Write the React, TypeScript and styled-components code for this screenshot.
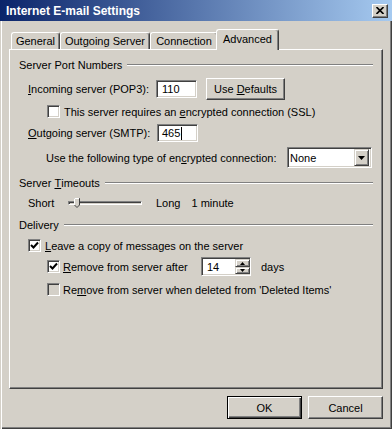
import styled, { createGlobalStyle } from "styled-components";

const GlobalStyle = createGlobalStyle`
  html, body {
    margin: 0;
    padding: 0;
    background: #d4d0c8;
  }
  body {
    font-family: "Liberation Sans", Arial, sans-serif;
    font-size: 11px;
    color: #000;
  }
`;

const Window = styled.div`
  width: 392px;
  height: 429px;
  box-sizing: border-box;
  background: #d4d0c8;
  display: flex;
  flex-direction: column;
  box-shadow: inset 1px 0 0 #d4d0c8, inset 2px 0 0 #fff,
    inset -1px -1px 0 #404040, inset -2px -2px 0 #808080;
`;

const TitleBar = styled.div`
  height: 21px;
  flex-shrink: 0;
  display: flex;
  align-items: center;
  justify-content: space-between;
  padding: 0 4px 0 6px;
  background: linear-gradient(to right, #0a246a, #a6caf0);
`;

const Title = styled.span`
  color: #fff;
  font-weight: bold;
  font-size: 12px;
`;

const CloseButton = styled.div`
  width: 16px;
  height: 14px;
  box-sizing: border-box;
  display: flex;
  align-items: center;
  justify-content: center;
  background: #d4d0c8;
  border: 1px solid;
  border-color: #fff #404040 #404040 #fff;
  box-shadow: inset -1px -1px 0 #808080;
`;

const Body = styled.div`
  flex: 1;
  display: flex;
  flex-direction: column;
  padding: 8px 9px 10px 9px;
`;

const TabStrip = styled.div`
  height: 20px;
  display: flex;
  align-items: flex-end;
  padding-left: 2px;
`;

const Tab = styled.div<{ $w: number; $active?: boolean }>`
  width: ${(p) => p.$w}px;
  height: ${(p) => (p.$active ? 21 : 17)}px;
  margin-bottom: ${(p) => (p.$active ? -1 : 0)}px;
  margin-left: ${(p) => (p.$active ? -2 : 0)}px;
  position: relative;
  z-index: ${(p) => (p.$active ? 2 : 1)};
  box-sizing: border-box;
  display: flex;
  align-items: center;
  justify-content: center;
  padding-bottom: ${(p) => (p.$active ? 2 : 0)}px;
  background: #d4d0c8;
  border-top: 1px solid #fff;
  border-left: 1px solid #fff;
  border-right: 1px solid #404040;
  border-radius: 3px 3px 0 0;
  box-shadow: inset -1px 0 0 #808080;
  white-space: nowrap;
`;

const Panel = styled.div`
  flex: 1;
  box-sizing: border-box;
  border: 1px solid;
  border-color: #fff #404040 #404040 #fff;
  box-shadow: inset -1px -1px 0 #808080;
  padding: 8px 9px 0 9px;
  display: flex;
  flex-direction: column;
`;

const GroupHeader = styled.div<{ $mt: number }>`
  display: flex;
  align-items: center;
  height: 14px;
  margin-top: ${(p) => p.$mt}px;

  &::after {
    content: "";
    flex: 1;
    margin-left: 5px;
    border-top: 1px solid #808080;
    border-bottom: 1px solid #fff;
  }
`;

const Row = styled.div<{ $mt: number; $indent: number; $h: number }>`
  display: flex;
  align-items: center;
  height: ${(p) => p.$h}px;
  margin-top: ${(p) => p.$mt}px;
  padding-left: ${(p) => p.$indent}px;
  white-space: nowrap;
`;

const Label = styled.span<{ $w?: number; $ml?: number }>`
  flex-shrink: 0;
  width: ${(p) => (p.$w ? `${p.$w}px` : "auto")};
  margin-left: ${(p) => p.$ml ?? 0}px;
`;

const Sunken = styled.div<{ $w: number; $h: number; $ml?: number }>`
  width: ${(p) => p.$w}px;
  height: ${(p) => p.$h}px;
  margin-left: ${(p) => p.$ml ?? 0}px;
  flex-shrink: 0;
  box-sizing: border-box;
  display: flex;
  align-items: center;
  background: #fff;
  border: 1px solid;
  border-color: #808080 #fff #fff #808080;
  box-shadow: inset 1px 1px 0 #404040, inset -1px -1px 0 #d4d0c8;
`;

const FieldText = styled.span<{ $pl: number }>`
  padding-left: ${(p) => p.$pl}px;
  flex: 1;
  display: flex;
  align-items: center;
`;

const Caret = styled.span`
  display: inline-block;
  width: 1px;
  height: 13px;
  background: #000;
  margin-left: 1px;
`;

const RaisedButton = styled.div<{ $w: number; $h: number; $ml?: number; $default?: boolean }>`
  width: ${(p) => p.$w}px;
  height: ${(p) => p.$h}px;
  margin-left: ${(p) => p.$ml ?? 0}px;
  flex-shrink: 0;
  box-sizing: border-box;
  display: flex;
  align-items: center;
  justify-content: center;
  background: #d4d0c8;
  border: 1px solid;
  border-color: ${(p) => (p.$default ? "#000" : "#fff #404040 #404040 #fff")};
  box-shadow: ${(p) =>
    p.$default
      ? "inset 1px 1px 0 #fff, inset -1px -1px 0 #404040, inset -2px -2px 0 #808080"
      : "inset -1px -1px 0 #808080"};
`;

const ArrowButton = styled.div<{ $w: number; $h: number }>`
  width: ${(p) => p.$w}px;
  height: ${(p) => p.$h}px;
  box-sizing: border-box;
  display: flex;
  align-items: center;
  justify-content: center;
  background: #d4d0c8;
  border: 1px solid;
  border-color: #d4d0c8 #404040 #404040 #d4d0c8;
  box-shadow: inset 1px 1px 0 #fff, inset -1px -1px 0 #808080;
`;

const SpinButtons = styled.div`
  display: flex;
  flex-direction: column;
  margin-right: 0;
`;

const Check = styled.div<{ $ml?: number; $gray?: boolean }>`
  width: 13px;
  height: 13px;
  margin-left: ${(p) => p.$ml ?? 0}px;
  flex-shrink: 0;
  box-sizing: border-box;
  display: flex;
  align-items: center;
  justify-content: center;
  background: ${(p) => (p.$gray ? "#d4d0c8" : "#fff")};
  border: 1px solid;
  border-color: #808080 #fff #fff #808080;
  box-shadow: inset 1px 1px 0 #404040, inset -1px -1px 0 #d4d0c8;
`;

const Slider = styled.div`
  position: relative;
  width: 74px;
  height: 14px;
  flex-shrink: 0;
  display: flex;
  align-items: center;
`;

const Track = styled.div`
  width: 100%;
  height: 4px;
  box-sizing: border-box;
  border: 1px solid;
  border-color: #808080 #fff #fff #808080;
  box-shadow: inset 1px 1px 0 #404040;
`;

const Thumb = styled.svg`
  position: absolute;
  left: 6px;
  top: 2px;
`;

const Footer = styled.div`
  display: flex;
  justify-content: flex-end;
  gap: 6px;
  margin-top: 7px;
`;

const Key = styled.span`
  text-decoration: underline;
`;

const CheckMark = () => (
  <svg width="9" height="9" viewBox="0 0 9 9">
    <path d="M1 4 L3.5 6.5 L8 1.5" fill="none" stroke="#000" strokeWidth="2" />
  </svg>
);

const Triangle = ({ up, size }: { up?: boolean; size: number }) => (
  <svg width={size * 2 + 1} height={size + 1} viewBox={`0 0 ${size * 2 + 1} ${size + 1}`}>
    <path
      d={
        up
          ? `M0 ${size + 1} L${size + 0.5} 0 L${size * 2 + 1} ${size + 1} Z`
          : `M0 0 L${size * 2 + 1} 0 L${size + 0.5} ${size + 1} Z`
      }
      fill="#000"
    />
  </svg>
);

export default function App() {
  return (
    <>
      <GlobalStyle />
      <Window>
        <TitleBar>
          <Title>Internet E-mail Settings</Title>
          <CloseButton>
            <svg width="8" height="7" viewBox="0 0 8 7">
              <path d="M0.5 0 L7.5 7 M7.5 0 L0.5 7" stroke="#000" strokeWidth="1.6" />
            </svg>
          </CloseButton>
        </TitleBar>
        <Body>
          <TabStrip>
            <Tab $w={49}>General</Tab>
            <Tab $w={90}>Outgoing Server</Tab>
            <Tab $w={68}>Connection</Tab>
            <Tab $w={63} $active>
              Advanced
            </Tab>
          </TabStrip>
          <Panel>
            <GroupHeader $mt={0}>Server Port Numbers</GroupHeader>
            <Row $mt={6} $indent={9} $h={22}>
              <Label $w={128}>
                <Key>I</Key>ncoming server (POP3):
              </Label>
              <Sunken $w={41} $h={18}>
                <FieldText $pl={5}>110</FieldText>
              </Sunken>
              <RaisedButton $w={79} $h={22} $ml={9}>
                Use&nbsp;<Key>D</Key>efaults
              </RaisedButton>
            </Row>
            <Row $mt={5} $indent={28} $h={13}>
              <Check />
              <Label $ml={4}>
                This server requires an <Key>e</Key>ncrypted connection (SSL)
              </Label>
            </Row>
            <Row $mt={6} $indent={9} $h={18}>
              <Label $w={129}>
                <Key>O</Key>utgoing server (SMTP):
              </Label>
              <Sunken $w={41} $h={18}>
                <FieldText $pl={4}>
                  465
                  <Caret />
                </FieldText>
              </Sunken>
            </Row>
            <Row $mt={5} $indent={27} $h={21}>
              <Label $w={241}>
                Use the following type of en<Key>c</Key>rypted connection:
              </Label>
              <Sunken $w={85} $h={21}>
                <FieldText $pl={2}>None</FieldText>
                <ArrowButton $w={15} $h={17} style={{ marginRight: 2 }}>
                  <Triangle size={3} />
                </ArrowButton>
              </Sunken>
            </Row>

            <GroupHeader $mt={8}>
              Server&nbsp;<Key>T</Key>imeouts
            </GroupHeader>
            <Row $mt={3} $indent={9} $h={20}>
              <Label $w={40}>Short</Label>
              <Slider>
                <Track />
                <Thumb width="6" height="10" viewBox="0 0 6 10">
                  <path d="M0.5 0.5 H5.5 V7 L3 9.5 L0.5 7 Z" fill="#d4d0c8" stroke="#404040" />
                  <path d="M0.5 7 V0.5 H5" fill="none" stroke="#fff" />
                </Thumb>
              </Slider>
              <Label $ml={14}>Long</Label>
              <Label $ml={11}>1 minute</Label>
            </Row>

            <GroupHeader $mt={5}>Delivery</GroupHeader>
            <Row $mt={7} $indent={9} $h={13}>
              <Check>
                <CheckMark />
              </Check>
              <Label $ml={4}>
                <Key>L</Key>eave a copy of messages on the server
              </Label>
            </Row>
            <Row $mt={5} $indent={28} $h={19}>
              <Check>
                <CheckMark />
              </Check>
              <Label $w={138} $ml={3}>
                <Key>R</Key>emove from server after
              </Label>
              <Sunken $w={50} $h={19}>
                <FieldText $pl={5}>14</FieldText>
                <SpinButtons>
                  <ArrowButton $w={15} $h={8}>
                    <Triangle up size={2} />
                  </ArrowButton>
                  <ArrowButton $w={15} $h={7}>
                    <Triangle size={2} />
                  </ArrowButton>
                </SpinButtons>
              </Sunken>
              <Label $ml={10}>days</Label>
            </Row>
            <Row $mt={7} $indent={28} $h={13}>
              <Check $gray />
              <Label $ml={3}>
                Re<Key>m</Key>ove from server when deleted from 'Deleted Items'
              </Label>
            </Row>
          </Panel>
          <Footer>
            <RaisedButton $w={75} $h={23} $default>
              OK
            </RaisedButton>
            <RaisedButton $w={75} $h={23}>
              Cancel
            </RaisedButton>
          </Footer>
        </Body>
      </Window>
    </>
  );
}
